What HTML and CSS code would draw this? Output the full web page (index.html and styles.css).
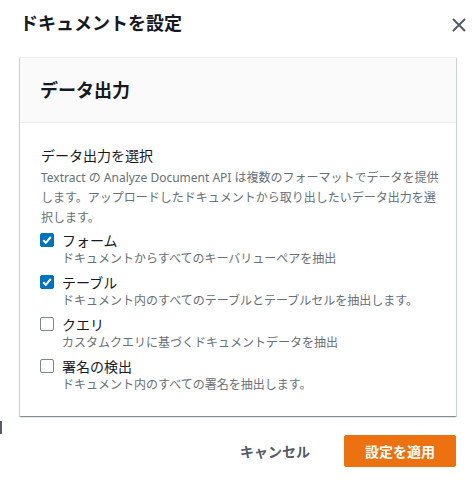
FILE: index.html
```html
<!DOCTYPE html>
<html lang="ja">
<head>
<meta charset="utf-8">
<link rel="stylesheet" href="styles.css">
</head>
<body>
<div class="edge-mark"></div>
<div class="dialog">
  <div class="dialog-header">
    <h1 class="dialog-title">ドキュメントを設定</h1>
    <button class="close-btn" aria-label="閉じる">
      <svg width="16" height="16" viewBox="0 0 16 16"><path d="M2 2 L14 14 M14 2 L2 14" stroke="#545b64" stroke-width="2" fill="none"/></svg>
    </button>
  </div>
  <div class="card">
    <div class="card-header">
      <h2 class="card-title">データ出力</h2>
    </div>
    <div class="card-body">
      <div class="field-label">データ出力を選択</div>
      <p class="field-desc">Textract の Analyze Document API は複数のフォーマットでデータを提供します。アップロードしたドキュメントから取り出したいデータ出力を選択します。</p>
      <div class="options">
        <label class="option">
          <span class="checkbox checked"><svg width="14" height="14" viewBox="0 0 14 14"><path d="M3.2 7.2 L5.8 9.8 L10.8 4" stroke="#fff" stroke-width="2" fill="none"/></svg></span>
          <span class="option-text"><span class="option-label">フォーム</span><span class="option-desc">ドキュメントからすべてのキーバリューペアを抽出</span></span>
        </label>
        <label class="option">
          <span class="checkbox checked"><svg width="14" height="14" viewBox="0 0 14 14"><path d="M3.2 7.2 L5.8 9.8 L10.8 4" stroke="#fff" stroke-width="2" fill="none"/></svg></span>
          <span class="option-text"><span class="option-label">テーブル</span><span class="option-desc">ドキュメント内のすべてのテーブルとテーブルセルを抽出します。</span></span>
        </label>
        <label class="option">
          <span class="checkbox"></span>
          <span class="option-text"><span class="option-label">クエリ</span><span class="option-desc">カスタムクエリに基づくドキュメントデータを抽出</span></span>
        </label>
        <label class="option">
          <span class="checkbox"></span>
          <span class="option-text"><span class="option-label">署名の検出</span><span class="option-desc">ドキュメント内のすべての署名を抽出します。</span></span>
        </label>
      </div>
    </div>
  </div>
  <div class="dialog-footer">
    <button class="btn btn-link">キャンセル</button>
    <button class="btn btn-primary">設定を適用</button>
  </div>
</div>
</body>
</html>
```
FILE: styles.css
```css
* { box-sizing: border-box; }
html, body { margin: 0; padding: 0; background: #fff; }
body {
  font-family: "Noto Sans", "Noto Sans CJK JP", sans-serif;
  color: #16191f;
  width: 472px;
  height: 484px;
  position: relative;
  overflow: hidden;
}
.edge-mark {
  position: absolute;
  left: 0;
  top: 421px;
  width: 2px;
  height: 13px;
  background: #545b64;
}
.dialog {
  padding: 9px 16px 0 20px;
}
.dialog-header {
  display: flex;
  justify-content: space-between;
  align-items: flex-start;
  height: 48px;
}
.dialog-title {
  margin: 0;
  font-size: 18px;
  line-height: 26px;
  font-weight: 700;
  font-family: "Noto Sans CJK JP", sans-serif;
  color: #16191f;
}
.close-btn {
  border: 0;
  background: none;
  padding: 0;
  margin: 8px -11px 0 0;
  width: 16px;
  height: 16px;
  display: flex;
}
.card {
  border-top: 1px solid #eaeded;
  box-shadow: 0 1px 1px 0 rgba(0, 28, 36, 0.3), 1px 1px 1px 0 rgba(0, 28, 36, 0.15), -1px 1px 1px 0 rgba(0, 28, 36, 0.15);
  background: #fff;
}
.card-header {
  background: #fafafa;
  border-bottom: 1px solid #eaeded;
  padding: 18px 20px 20px;
}
.card-title {
  margin: 0;
  font-size: 18px;
  line-height: 26px;
  font-weight: 700;
  font-family: "Noto Sans CJK JP", sans-serif;
}
.card-body {
  padding: 22px 14px 24px 21px;
}
.field-label {
  font-size: 14px;
  line-height: 20px;
  font-family: "Noto Sans CJK JP", sans-serif;
}
.field-desc {
  margin: 3px 0 0;
  font-size: 12px;
  line-height: 20px;
  color: #687078;
}
.options {
  display: flex;
  flex-direction: column;
  gap: 6px;
  margin-top: 2px;
}
.option {
  display: flex;
  align-items: flex-start;
  gap: 8px;
}
.checkbox {
  flex: none;
  width: 14px;
  height: 14px;
  margin-top: 3px;
  margin-left: -1px;
  border: 1px solid #7d868c;
  border-radius: 2px;
  display: flex;
  align-items: center;
  justify-content: center;
  background: #fff;
}
.checkbox.checked {
  background: #0073bb;
  border-color: #0073bb;
}
.checkbox svg { flex: none; }
.option-text {
  display: flex;
  flex-direction: column;
}
.option-label {
  font-size: 14px;
  line-height: 20px;
  font-family: "Noto Sans CJK JP", sans-serif;
}
.option-desc {
  font-size: 12px;
  line-height: 16px;
  color: #687078;
  font-family: "Noto Sans CJK JP", sans-serif;
}
.dialog-footer {
  display: flex;
  justify-content: flex-end;
  gap: 13px;
  margin-top: 19px;
}
.btn {
  font-family: "Noto Sans CJK JP", sans-serif;
  font-size: 14px;
  line-height: 22px;
  font-weight: 700;
  padding: 4px 20px;
  border: 1px solid transparent;
  border-radius: 2px;
  background: none;
  cursor: pointer;
}
.btn-link {
  color: #545b64;
}
.btn-primary {
  background: #ec7211;
  border-color: #ec7211;
  color: #fff;
}
```
